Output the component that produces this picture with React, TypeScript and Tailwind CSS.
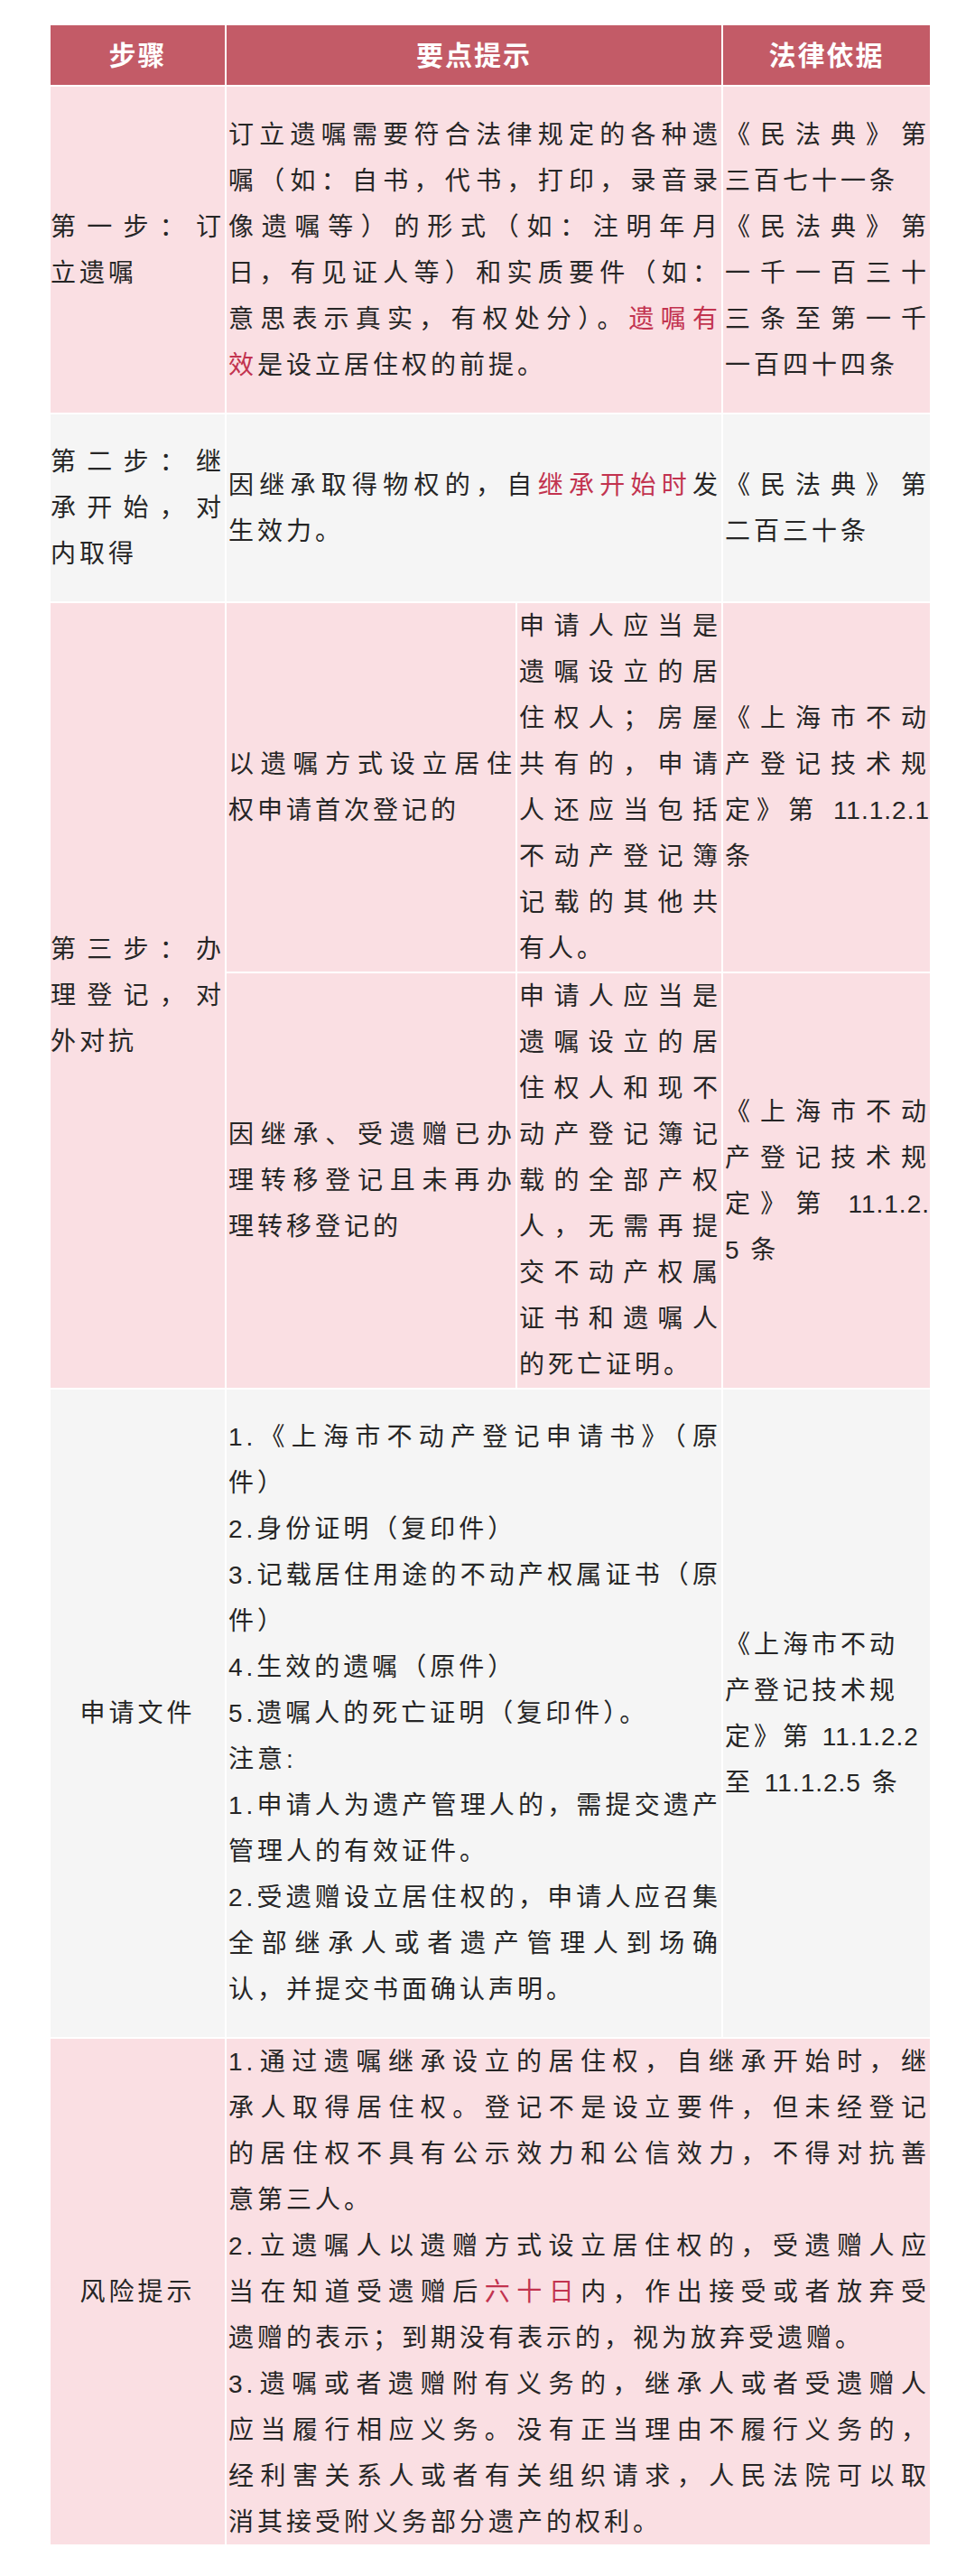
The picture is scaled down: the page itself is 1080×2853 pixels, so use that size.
import type { ReactNode } from 'react'

// one line that is stretched to the full cell width
const J = ({ children }: { children: ReactNode }) => (
  <span className="block text-justify [text-align-last:justify]">{children}</span>
)

// last line of a paragraph, left aligned
const L = ({ children }: { children: ReactNode }) => <span className="block">{children}</span>

const Red = ({ children }: { children: ReactNode }) => (
  <span className="text-[#c2334f]">{children}</span>
)

const Num = ({ children }: { children: ReactNode }) => (
  <span className="tracking-[1px]">{children}</span>
)

const pink = 'bg-[#fadfe3]'
const gray = 'bg-[#f5f5f5]'

function Cell({
  bg,
  className = '',
  children,
}: {
  bg: string
  className?: string
  children: ReactNode
}) {
  return <div className={`${bg} flex flex-col justify-center ${className}`}>{children}</div>
}

function Head({ children, className = '' }: { children: ReactNode; className?: string }) {
  return (
    <div
      className={`bg-[#c35b67] flex items-center justify-center text-white font-bold text-[30px] tracking-[2px] ${className}`}
    >
      {children}
    </div>
  )
}

export default function App() {
  return (
    <div className="min-h-[2853px] bg-white pt-[28px] pl-[56px] font-['Liberation_Sans','Noto_Sans_CJK_SC',sans-serif] text-[28px] leading-[51px] tracking-[4px] text-[#262626]">
      <div className="grid w-[974px] grid-cols-[193px_320px_226px_229px] grid-rows-[66px_361px_207px_408px_459px_717px_560px] gap-[2px] bg-white">
        {/* header */}
        <Head>步骤</Head>
        <Head className="col-span-2">要点提示</Head>
        <Head>法律依据</Head>

        {/* step 1 */}
        <Cell bg={pink}>
          <J>第一步：订</J>
          <L>立遗嘱</L>
        </Cell>
        <Cell bg={pink} className="col-span-2 pl-[2px]">
          <J>订立遗嘱需要符合法律规定的各种遗</J>
          <J>嘱（如：自书，代书，打印，录音录</J>
          <J>像遗嘱等）的形式（如：注明年月</J>
          <J>日，有见证人等）和实质要件（如：</J>
          <J>
            意思表示真实，有权处分）。<Red>遗嘱有</Red>
          </J>
          <L>
            <Red>效</Red>是设立居住权的前提。
          </L>
        </Cell>
        <Cell bg={pink} className="pl-[2px]">
          <J>《民法典》第</J>
          <L>三百七十一条</L>
          <J>《民法典》第</J>
          <J>一千一百三十</J>
          <J>三条至第一千</J>
          <L>一百四十四条</L>
        </Cell>

        {/* step 2 */}
        <Cell bg={gray}>
          <J>第二步：继</J>
          <J>承开始，对</J>
          <L>内取得</L>
        </Cell>
        <Cell bg={gray} className="col-span-2 pl-[2px]">
          <J>
            因继承取得物权的，自<Red>继承开始时</Red>发
          </J>
          <L>生效力。</L>
        </Cell>
        <Cell bg={gray} className="pl-[2px]">
          <J>《民法典》第</J>
          <L>二百三十条</L>
        </Cell>

        {/* step 3 */}
        <Cell bg={pink} className="row-span-2">
          <J>第三步：办</J>
          <J>理登记，对</J>
          <L>外对抗</L>
        </Cell>
        <Cell bg={pink} className="pl-[2px]">
          <J>以遗嘱方式设立居住</J>
          <L>权申请首次登记的</L>
        </Cell>
        <Cell bg={pink} className="pl-[2px]">
          <J>申请人应当是</J>
          <J>遗嘱设立的居</J>
          <J>住权人；房屋</J>
          <J>共有的，申请</J>
          <J>人还应当包括</J>
          <J>不动产登记簿</J>
          <J>记载的其他共</J>
          <L>有人。</L>
        </Cell>
        <Cell bg={pink} className="pl-[2px]">
          <J>《上海市不动</J>
          <J>产登记技术规</J>
          <J>
            定》第 <Num>11.1.2.1</Num>
          </J>
          <L>条</L>
        </Cell>

        <Cell bg={pink} className="pl-[2px]">
          <J>因继承、受遗赠已办</J>
          <J>理转移登记且未再办</J>
          <L>理转移登记的</L>
        </Cell>
        <Cell bg={pink} className="pl-[2px]">
          <J>申请人应当是</J>
          <J>遗嘱设立的居</J>
          <J>住权人和现不</J>
          <J>动产登记簿记</J>
          <J>载的全部产权</J>
          <J>人，无需再提</J>
          <J>交不动产权属</J>
          <J>证书和遗嘱人</J>
          <L>的死亡证明。</L>
        </Cell>
        <Cell bg={pink} className="pl-[2px]">
          <J>《上海市不动</J>
          <J>产登记技术规</J>
          <J>
            定》第 <Num>11.1.2.</Num>
          </J>
          <L>
            <Num>5</Num> 条
          </L>
        </Cell>

        {/* documents */}
        <Cell bg={gray} className="items-center">
          <L>申请文件</L>
        </Cell>
        <Cell bg={gray} className="col-span-2 pl-[2px]">
          <J>1.《上海市不动产登记申请书》（原</J>
          <L>件）</L>
          <L>2.身份证明（复印件）</L>
          <J>3.记载居住用途的不动产权属证书（原</J>
          <L>件）</L>
          <L>4.生效的遗嘱（原件）</L>
          <L>5.遗嘱人的死亡证明（复印件）。</L>
          <L>注意:</L>
          <J>1.申请人为遗产管理人的，需提交遗产</J>
          <L>管理人的有效证件。</L>
          <J>2.受遗赠设立居住权的，申请人应召集</J>
          <J>全部继承人或者遗产管理人到场确</J>
          <L>认，并提交书面确认声明。</L>
        </Cell>
        <Cell bg={gray} className="pl-[2px]">
          <L>《上海市不动</L>
          <L>产登记技术规</L>
          <L>
            定》第 <Num>11.1.2.2</Num>
          </L>
          <L>
            至 <Num>11.1.2.5</Num> 条
          </L>
        </Cell>

        {/* risks */}
        <Cell bg={pink} className="items-center">
          <L>风险提示</L>
        </Cell>
        <Cell bg={pink} className="col-span-3 pl-[2px]">
          <J>1.通过遗嘱继承设立的居住权，自继承开始时，继</J>
          <J>承人取得居住权。登记不是设立要件，但未经登记</J>
          <J>的居住权不具有公示效力和公信效力，不得对抗善</J>
          <L>意第三人。</L>
          <J>2.立遗嘱人以遗赠方式设立居住权的，受遗赠人应</J>
          <J>
            当在知道受遗赠后<Red>六十日</Red>内，作出接受或者放弃受
          </J>
          <L>遗赠的表示；到期没有表示的，视为放弃受遗赠。</L>
          <J>3.遗嘱或者遗赠附有义务的，继承人或者受遗赠人</J>
          <J>应当履行相应义务。没有正当理由不履行义务的，</J>
          <J>经利害关系人或者有关组织请求，人民法院可以取</J>
          <L>消其接受附义务部分遗产的权利。</L>
        </Cell>
      </div>
    </div>
  )
}
